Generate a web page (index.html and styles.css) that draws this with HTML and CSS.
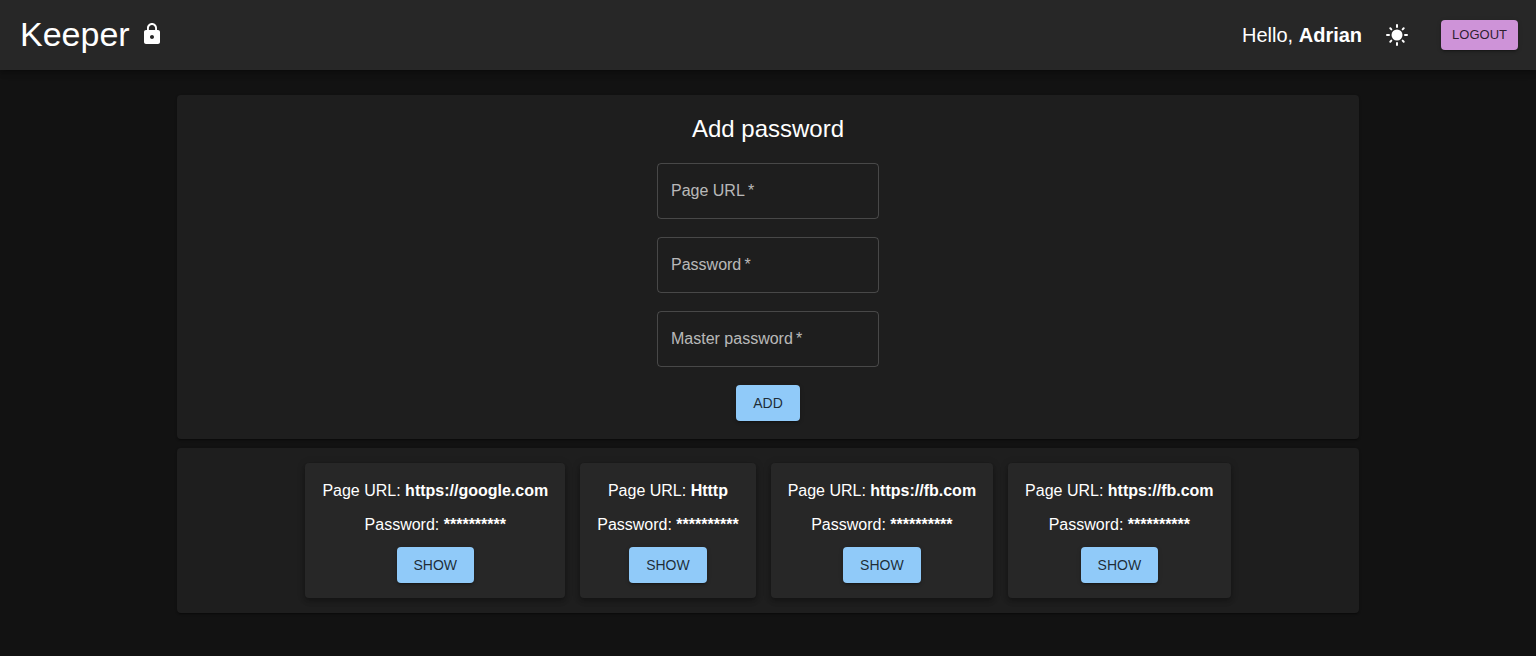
FILE: index.html
```html
<!DOCTYPE html>
<html lang="en">
<head>
<meta charset="utf-8">
<meta name="viewport" content="width=device-width, initial-scale=1">
<title>Keeper</title>
<link rel="stylesheet" href="styles.css">
</head>
<body>
<header class="app-bar">
  <h1 class="brand">Keeper
    <svg class="icon" viewBox="0 0 24 24" aria-hidden="true"><path d="M18 8h-1V6c0-2.760-2.240-5-5-5S7 3.240 7 6v2H6c-1.100 0-2 .900-2 2v10c0 1.100.900 2 2 2h12c1.100 0 2-.900 2-2V10c0-1.100-.900-2-2-2zm-6 9c-1.100 0-2-.900-2-2s.900-2 2-2 2 .900 2 2-.900 2-2 2zm3.100-9H8.900V6c0-1.710 1.390-3.100 3.100-3.100s3.100 1.390 3.100 3.100v2z"/></svg>
  </h1>
  <div class="actions">
    <p class="greeting">Hello, <strong>Adrian</strong></p>
    <button class="icon-button" type="button" aria-label="Toggle theme">
      <svg class="icon" viewBox="0 0 24 24" aria-hidden="true"><circle cx="12" cy="12" r="5.500"/><path class="rays" d="M2 12h2M20 12h2M12 2v2M12 20v2M5.300 5.300l1.050 1.050M17.650 17.650l1.050 1.050M18.700 5.300l-1.050 1.050M6.350 17.650l-1.050 1.050"/></svg>
    </button>
    <button class="button button-logout" type="button">LOGOUT</button>
  </div>
</header>
<main class="content">
  <form class="panel add-form">
    <h2 class="form-title">Add password</h2>
    <div class="field">
      <input class="field-input" id="url" type="text" placeholder=" " required>
      <label class="field-label" for="url">Page URL&thinsp;*</label>
    </div>
    <div class="field">
      <input class="field-input" id="password" type="password" placeholder=" " required>
      <label class="field-label" for="password">Password&thinsp;*</label>
    </div>
    <div class="field">
      <input class="field-input" id="master" type="password" placeholder=" " required>
      <label class="field-label" for="master">Master password&thinsp;*</label>
    </div>
    <button class="button" type="submit">ADD</button>
  </form>
  <section class="panel card-list" aria-label="Saved passwords">
    <article class="card">
      <p class="card-line">Page URL: <strong>https://google.com</strong></p>
      <p class="card-line">Password: <strong>**********</strong></p>
      <button class="button" type="button">SHOW</button>
    </article>
    <article class="card">
      <p class="card-line">Page URL: <strong>Htttp</strong></p>
      <p class="card-line">Password: <strong>**********</strong></p>
      <button class="button" type="button">SHOW</button>
    </article>
    <article class="card">
      <p class="card-line">Page URL: <strong>https://fb.com</strong></p>
      <p class="card-line">Password: <strong>**********</strong></p>
      <button class="button" type="button">SHOW</button>
    </article>
    <article class="card">
      <p class="card-line">Page URL: <strong>https://fb.com</strong></p>
      <p class="card-line">Password: <strong>**********</strong></p>
      <button class="button" type="button">SHOW</button>
    </article>
  </section>
</main>
</body>
</html>
```

FILE: styles.css
```css
* {
  box-sizing: border-box;
}

body {
  margin: 0;
  background: #121212;
  color: #fff;
  font-family: "Liberation Sans", Arial, sans-serif;
  font-size: 16px;
  line-height: 24px;
}

h1, h2, p {
  margin: 0;
  font-weight: 400;
}

.app-bar {
  display: flex;
  align-items: center;
  justify-content: space-between;
  padding: 13px 18px 15px 20px;
  background: #272727;
  box-shadow: 0 2px 4px -1px rgba(0, 0, 0, 0.2), 0 4px 5px rgba(0, 0, 0, 0.14), 0 1px 10px rgba(0, 0, 0, 0.12);
}

.brand {
  display: flex;
  align-items: center;
  gap: 10px;
  font-size: 34px;
  line-height: 42px;
}

.icon {
  display: block;
  width: 24px;
  height: 24px;
  fill: currentColor;
}

.rays {
  fill: none;
  stroke: currentColor;
  stroke-width: 2;
  stroke-linecap: round;
}

.actions {
  display: flex;
  align-items: center;
  padding-top: 2px;
}

.greeting {
  margin-right: 15px;
  font-size: 20px;
  line-height: 32px;
}

.icon-button {
  margin-right: 24px;
  padding: 8px;
  border: 0;
  border-radius: 50%;
  background: transparent;
  color: inherit;
  cursor: pointer;
}

.button {
  min-width: 64px;
  padding: 6px 17px;
  border: 0;
  border-radius: 4px;
  background: #90caf9;
  color: rgba(0, 0, 0, 0.8);
  font-family: inherit;
  font-size: 14px;
  line-height: 24px;
  box-shadow: 0 3px 1px -2px rgba(0, 0, 0, 0.2), 0 2px 2px rgba(0, 0, 0, 0.14), 0 1px 5px rgba(0, 0, 0, 0.12);
  cursor: pointer;
}

.button-logout {
  padding: 4px 11px;
  background: #ce93d8;
  font-size: 13px;
  line-height: 22px;
}

.content {
  display: flex;
  flex-direction: column;
  gap: 9px;
  max-width: 1182px;
  margin: 25px auto;
}

.panel {
  border-radius: 4px;
  background: #1e1e1e;
  box-shadow: 0 2px 1px -1px rgba(0, 0, 0, 0.2), 0 1px 1px rgba(0, 0, 0, 0.14), 0 1px 3px rgba(0, 0, 0, 0.12);
}

.add-form {
  display: flex;
  flex-direction: column;
  align-items: center;
  gap: 18px;
  padding: 18px;
}

.form-title {
  font-size: 24px;
  line-height: 32px;
}

.field {
  display: grid;
  align-items: center;
}

.field-input,
.field-label {
  grid-area: 1 / 1;
}

.field-input {
  width: 222px;
  height: 56px;
  padding: 16px 14px;
  border: 1px solid rgba(255, 255, 255, 0.19);
  border-radius: 4px;
  background: transparent;
  color: inherit;
  font: inherit;
}

.field-label {
  padding: 0 14px;
  color: rgba(255, 255, 255, 0.7);
  pointer-events: none;
}

.field-input:focus + .field-label,
.field-input:not(:placeholder-shown) + .field-label {
  visibility: hidden;
}

.card-list {
  display: flex;
  flex-wrap: wrap;
  justify-content: center;
  gap: 15px;
  padding: 15px;
}

.card {
  display: flex;
  flex-direction: column;
  align-items: center;
  gap: 10px;
  padding: 16px 17px 15px;
  border-radius: 4px;
  background: #272727;
  box-shadow: 0 2px 4px -1px rgba(0, 0, 0, 0.2), 0 4px 5px rgba(0, 0, 0, 0.14), 0 1px 10px rgba(0, 0, 0, 0.12);
}
```
